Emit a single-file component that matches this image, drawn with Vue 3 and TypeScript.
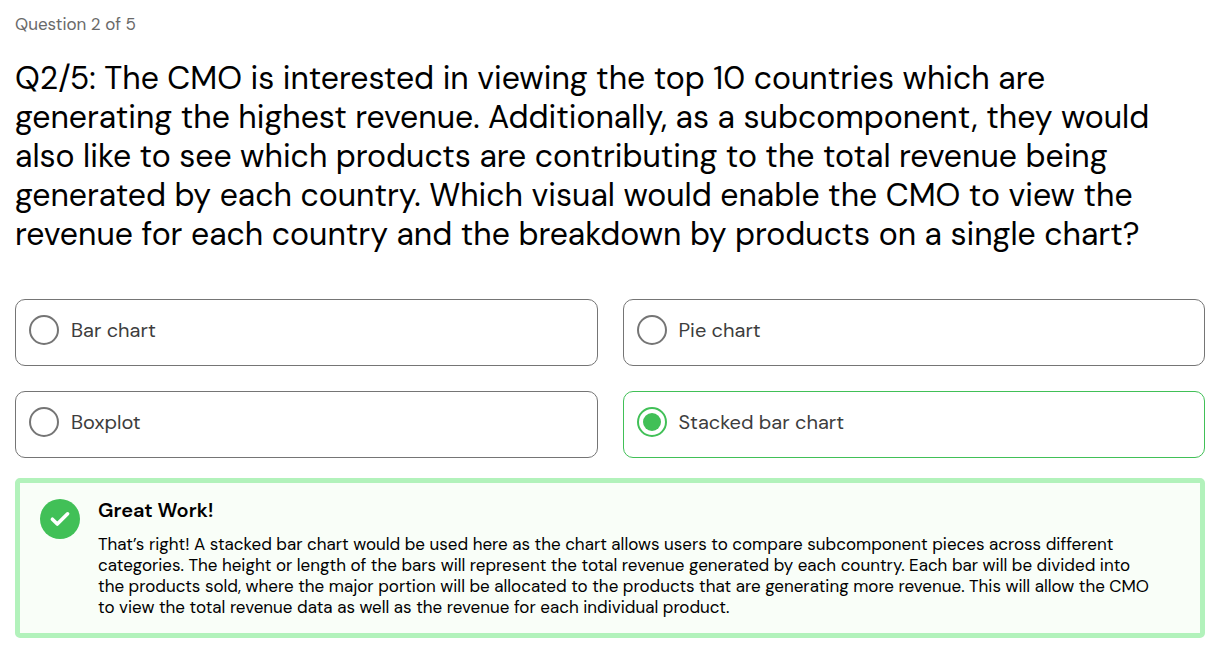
<script setup lang="ts">
import { ref } from 'vue'

interface Option {
  id: string
  label: string
}

const options: Option[] = [
  { id: 'bar', label: 'Bar chart' },
  { id: 'pie', label: 'Pie chart' },
  { id: 'box', label: 'Boxplot' },
  { id: 'stacked', label: 'Stacked bar chart' },
]
const correct = 'stacked'
const selected = ref<string>(correct)
</script>

<template>
  <main class="quiz">
    <p class="progress">Question 2 of 5</p>
    <h1 id="question" class="question">
      Q2/5: The CMO is interested in viewing the top 10 countries which are generating the highest
      revenue. Additionally, as a subcomponent, they would also like to see which products are
      contributing to the total revenue being generated by each country. Which visual would enable
      the CMO to view the revenue for each country and the breakdown by products on a single chart?
    </h1>

    <div class="options" role="radiogroup" aria-labelledby="question">
      <label
        v-for="option in options"
        :key="option.id"
        class="option"
        :class="{ chosen: selected === option.id }"
        :for="option.id"
      >
        <input :id="option.id" v-model="selected" class="radio" type="radio" name="answer" :value="option.id" />
        <span class="label">{{ option.label }}</span>
      </label>
    </div>

    <section v-if="selected === correct" class="feedback">
      <svg class="badge" viewBox="0 0 40 40" aria-hidden="true">
        <circle cx="20" cy="20" r="20" fill="#41c057" />
        <path d="M12.4 20.2 L17.3 25 L27.6 14.8" fill="none" stroke="#fff" stroke-width="3.6" stroke-linecap="round" stroke-linejoin="round" />
      </svg>
      <div class="message">
        <h2 class="title">Great Work!</h2>
        <p class="text">
          That’s right! A stacked bar chart would be used here as the chart allows users to compare
          subcomponent pieces across different categories. The height or length of the bars will
          represent the total revenue generated by each country. Each bar will be divided into the
          products sold, where the major portion will be allocated to the products that are
          generating more revenue. This will allow the CMO to view the total revenue data as well as
          the revenue for each individual product.
        </p>
      </div>
    </section>
  </main>
</template>

<style>
body {
  margin: 0;
  background: #fff;
}
</style>

<style scoped>
.quiz {
  padding: 12px 22px 12px 15px;
  font-family: "DM Sans", Inter, "Open Sans", sans-serif;
  color: #000;
}
.progress {
  margin: 0 0 23px;
  font-size: 17px;
  line-height: 24px;
  color: #696969;
}
.question {
  margin: 0 0 45px;
  font-size: 32px;
  line-height: 39px;
  font-weight: 400;
}
.options {
  display: grid;
  grid-template-columns: 1fr 1fr;
  gap: 25px;
}
.option {
  display: flex;
  align-items: center;
  gap: 12px;
  padding: 15px 13px 20px;
  border: 1px solid #757575;
  border-radius: 10px;
  color: #3d3d3d;
  cursor: pointer;
}
.option.chosen {
  border-color: #41c057;
}
.radio {
  appearance: none;
  flex: none;
  box-sizing: border-box;
  width: 30px;
  height: 30px;
  margin: 0;
  padding: 4px;
  border: 2px solid #757575;
  border-radius: 50%;
  background: #fff;
  cursor: pointer;
}
.radio:checked {
  border-color: #41c057;
  background: #41c057 content-box;
}
.label {
  font-size: 20px;
  line-height: 30px;
}
.feedback {
  display: flex;
  align-items: flex-start;
  gap: 18px;
  margin-top: 20px;
  padding: 16px 44px 15px 20px;
  border: 5px solid #b2f2bb;
  border-radius: 5px;
  background: #f9fef8;
}
.badge {
  flex: none;
  width: 40px;
  height: 40px;
}
.message {
  flex: 1;
}
.title {
  margin: 0 0 13px;
  font-size: 20px;
  line-height: 22px;
  font-weight: 600;
}
.text {
  margin: 0;
  font-size: 17px;
  line-height: 21px;
}
</style>
